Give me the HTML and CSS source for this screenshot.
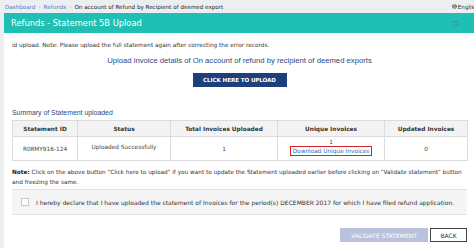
FILE: index.html
```html
<!DOCTYPE html>
<html lang="en">

<head>
  <meta charset="UTF-8">
  <meta name="viewport" content="width=device-width, initial-scale=1.0">
  <title>Refunds - Statement 5B Upload</title>
  <link rel="stylesheet" href="styles.css">
</head>

<body>
  <div class="breadcrumb">
    <a href="#">Dashboard</a>
    <span class="sep">›</span>
    <a href="#">Refunds</a>
    <span class="sep">›</span>
    <span class="current">On account of Refund by Recipient of deemed export</span>
    <span class="lang">
      <svg width="5" height="5" viewBox="0 0 10 10"><circle cx="5" cy="5" r="4.5" fill="#333"/><path d="M2 4h6M2 6.5h6M5 0.5c-2 2.5-2 6.5 0 9M5 0.5c2 2.5 2 6.5 0 9" stroke="#fff" stroke-width="0.9" fill="none"/></svg>
      English
    </span>
  </div>

  <div class="page">
    <div class="panel">
      <div class="panel-head">
        <h1>Refunds - Statement 5B Upload</h1>
        <svg class="refresh" width="7" height="7" viewBox="0 0 16 16">
          <path d="M13.5 6.5A5.7 5.7 0 0 0 3 5" stroke="#3b86c8" stroke-width="2.2" fill="none"/>
          <path d="M1 2v5h5z" fill="#3b86c8"/>
          <path d="M2.5 9.5A5.7 5.7 0 0 0 13 11" stroke="#3b86c8" stroke-width="2.2" fill="none"/>
          <path d="M15 14V9h-5z" fill="#3b86c8"/>
        </svg>
      </div>

      <div class="panel-body">
        <p class="msg">id upload. Note: Please upload the full statement again after correcting the error records.</p>

        <h2 class="upload-title">Upload invoice details of On account of refund by recipient of deemed exports</h2>
        <div class="upload-wrap">
          <button class="btn-upload">CLICK HERE TO UPLOAD</button>
        </div>

        <h3 class="summary-title">Summary of Statement uploaded</h3>
        <table class="summary">
          <thead>
            <tr>
              <th class="c1">Statement ID</th>
              <th class="c2">Status</th>
              <th class="c3">Total Invoices Uploaded</th>
              <th class="c4">Unique Invoices</th>
              <th class="c5">Updated Invoices</th>
            </tr>
          </thead>
          <tbody>
            <tr>
              <td>R08MY916-124</td>
              <td class="status">Uploaded Successfully</td>
              <td>1</td>
              <td class="unique">
                <div class="count">1</div>
                <a href="#" class="dl-link">Download Unique Invoices</a>
              </td>
              <td>0</td>
            </tr>
          </tbody>
        </table>

        <p class="note"><b class="note-label">Note:</b> Click on the above button "Click here to upload" if you want to update the Statement uploaded earlier before clicking on "Validate statement" button and freezing the same.</p>

        <div class="declare">
          <span class="check"></span>
          <span>I hereby declare that I have uploaded the statement of Invoices for the period(s) DECEMBER 2017 for which I have filed refund application.</span>
        </div>

        <div class="actions">
          <button class="btn-validate">VALIDATE STATEMENT</button>
          <button class="btn-back">BACK</button>
        </div>
      </div>
    </div>
  </div>
</body>

</html>
```

FILE: styles.css
```css
* {
  margin: 0;
  padding: 0;
  box-sizing: border-box;
}

body {
  font-family: "DejaVu Sans", Verdana, sans-serif;
  background-color: #eceef1;
  color: #333;
  overflow: hidden;
}

/* breadcrumb bar */
.breadcrumb {
  display: flex;
  align-items: center;
  height: 13px;
  padding-left: 5px;
  font-size: 5.6px;
  background-color: #eceef1;
  white-space: nowrap;
}

.breadcrumb a {
  color: #4a7fbf;
  text-decoration: none;
}

.breadcrumb .sep {
  color: #b5b9c0;
  margin: 0 3px;
}

.breadcrumb .current {
  color: #222;
}

.lang {
  display: flex;
  align-items: center;
  gap: 1px;
  margin-left: auto;
  margin-right: -4px;
  color: #333;
}

.page {
  padding-left: 4px;
}

.panel {
  background-color: #fff;
  height: 235px;
}

.panel-head {
  display: flex;
  align-items: center;
  justify-content: space-between;
  height: 20px;
  padding: 0 15px 0 7px;
  background-color: #1fbfb4;
}

.panel-head h1 {
  font-size: 8.3px;
  font-weight: normal;
  color: #fff;
}

.panel-body {
  padding: 0 7px 0 8px;
}

.msg {
  margin-top: 7px;
  line-height: 10px;
  font-size: 5.75px;
  color: #333;
  white-space: nowrap;
}

.upload-title {
  margin-top: 5px;
  line-height: 11px;
  text-align: center;
  font-family: "Liberation Sans", Arial, sans-serif;
  font-size: 7.7px;
  font-weight: normal;
  color: #2b4a7e;
}

.upload-wrap {
  display: flex;
  justify-content: center;
  margin-top: 7px;
}

.btn-upload {
  width: 94px;
  height: 14px;
  border: none;
  background-color: #1d3f7b;
  color: #fff;
  font-family: "DejaVu Sans", Verdana, sans-serif;
  font-size: 5.6px;
  font-weight: bold;
  letter-spacing: -0.1px;
}

.summary-title {
  margin-top: 20px;
  line-height: 11px;
  font-family: "Liberation Sans", Arial, sans-serif;
  font-size: 6.9px;
  font-weight: normal;
  color: #2b4a7e;
}

.summary {
  width: 455px;
  margin-top: 2px;
  border-collapse: collapse;
  table-layout: fixed;
  font-size: 5.8px;
  text-align: center;
}

.summary th,
.summary td {
  border: 1px solid #dcdcdc;
}

.summary th {
  height: 16px;
  background-color: #f3f3f3;
  font-weight: bold;
  font-size: 5.8px;
  color: #333;
}

.summary td {
  height: 24px;
  color: #444;
}

.summary .c1 { width: 65px; }
.summary .c2 { width: 93px; }
.summary .c3 { width: 107px; }
.summary .c4 { width: 107px; }
.summary .c5 { width: 83px; }

.summary .status {
  padding-bottom: 4px;
}

.unique .count {
  line-height: 7px;
  margin-top: -2px;
}

.dl-link {
  display: inline-block;
  padding: 0 2px;
  line-height: 8px;
  border: 1px solid #d8232a;
  color: #2f6db8;
  text-decoration: none;
}

.note {
  margin-top: 6px;
  line-height: 10px;
  font-size: 5.75px;
  color: #333;
}

.note-label {
  color: #222;
}

.declare {
  display: flex;
  align-items: center;
  gap: 7px;
  height: 26px;
  margin-top: 2px;
  padding-left: 9px;
  background-color: #f5f5f5;
  border-top: 1px solid #e2e2e2;
  border-bottom: 1px solid #e2e2e2;
  font-size: 6px;
  color: #333;
  white-space: nowrap;
}

.check {
  width: 8px;
  height: 8px;
  background-color: #fff;
  border: 1px solid #c8c8c8;
}

.actions {
  display: flex;
  justify-content: flex-end;
  gap: 2px;
  margin-top: 13px;
}

.actions button {
  height: 14px;
  font-family: "DejaVu Sans", Verdana, sans-serif;
  font-size: 6px;
}

.btn-validate {
  width: 88px;
  border: none;
  background-color: #b9c2da;
  color: #fff;
}

.btn-back {
  width: 37px;
  border: 1px solid #444;
  background-color: #fff;
  color: #333;
}
```
